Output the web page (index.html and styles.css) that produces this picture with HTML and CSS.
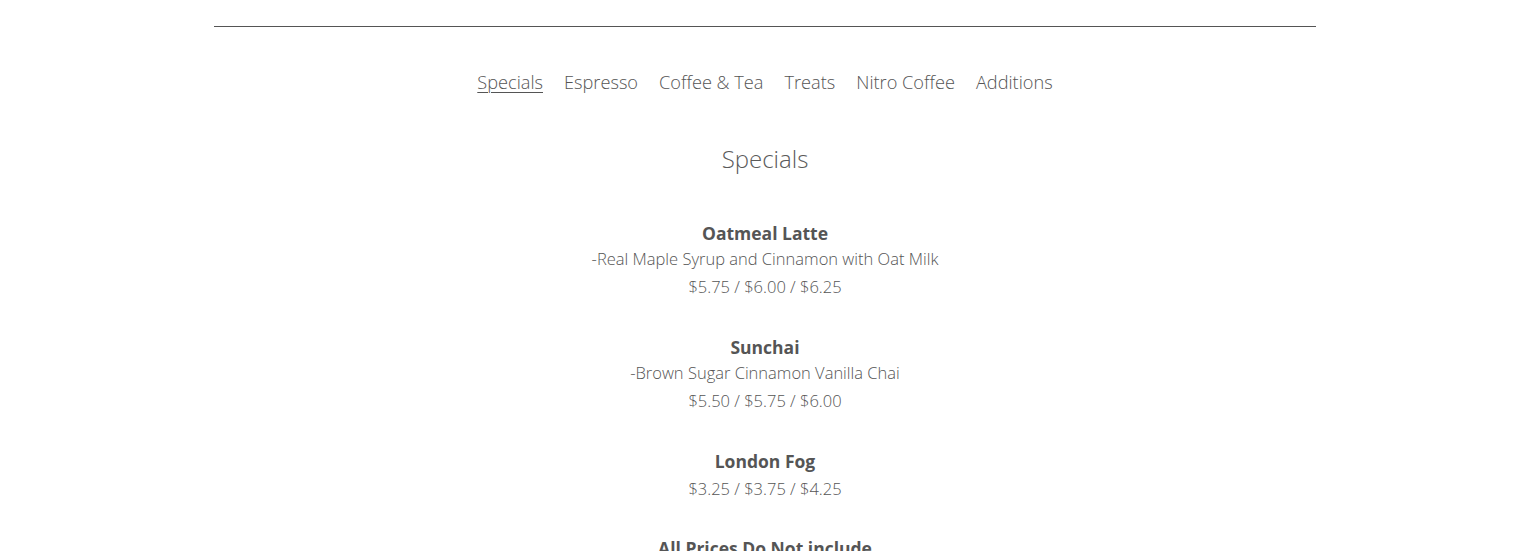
FILE: index.html
```html
<!DOCTYPE html>
<html>
<head>
<meta charset="utf-8">
<link rel="stylesheet" href="styles.css">
</head>
<body>
<div class="page">
  <hr class="rule">
  <nav class="tabs">
    <a class="tab active" href="#">Specials</a>
    <a class="tab" href="#">Espresso</a>
    <a class="tab" href="#">Coffee &amp; Tea</a>
    <a class="tab" href="#">Treats</a>
    <a class="tab" href="#">Nitro Coffee</a>
    <a class="tab" href="#">Additions</a>
  </nav>
  <h2 class="section-title">Specials</h2>
  <div class="items">
    <div class="item">
      <div class="item-name">Oatmeal Latte</div>
      <div class="item-desc">-Real Maple Syrup and Cinnamon with Oat Milk</div>
      <div class="item-price">$5.75 / $6.00 / $6.25</div>
    </div>
    <div class="item">
      <div class="item-name">Sunchai</div>
      <div class="item-desc">-Brown Sugar Cinnamon Vanilla Chai</div>
      <div class="item-price">$5.50 / $5.75 / $6.00</div>
    </div>
    <div class="item">
      <div class="item-name">London Fog</div>
      <div class="item-price">$3.25 / $3.75 / $4.25</div>
    </div>
    <div class="item item-note">
      <div class="item-name">All Prices Do Not include</div>
    </div>
  </div>
</div>
</body>
</html>
```

FILE: styles.css
```css
html, body {
  margin: 0;
  padding: 0;
  background: #fff;
}
body {
  font-family: "Open Sans", sans-serif;
  color: #5a5a5a;
}
.page {
  width: 1102px;
  margin: 0 auto;
  padding-top: 26px;
}
.rule {
  margin: 0;
  border: 0;
  border-top: 1px solid #555;
}
.tabs {
  display: flex;
  justify-content: center;
  gap: 21px;
  margin-top: 43px;
  font-size: 18.2px;
  font-weight: 300;
  line-height: 24px;
}
.tab {
  color: #555;
  text-decoration: none;
}
.tab.active {
  text-decoration: underline;
  text-underline-offset: 3px;
  text-decoration-thickness: 1px;
}
.section-title {
  margin: 50px 0 0;
  text-align: center;
  font-size: 24px;
  font-weight: 300;
  line-height: 30px;
  color: #5a5a5a;
}
.items {
  margin-top: 47px;
  display: flex;
  flex-direction: column;
  gap: 34px;
  text-align: center;
}
.item-name {
  font-size: 17.5px;
  font-weight: 700;
  line-height: 24px;
  color: #555;
}
.item-desc, .item-price {
  font-size: 16.5px;
  font-weight: 300;
  line-height: 28px;
  color: #555;
}
.item-name + .item-price {
  margin-top: 2px;
}
.item-note {
  margin-top: -1px;
}
```
